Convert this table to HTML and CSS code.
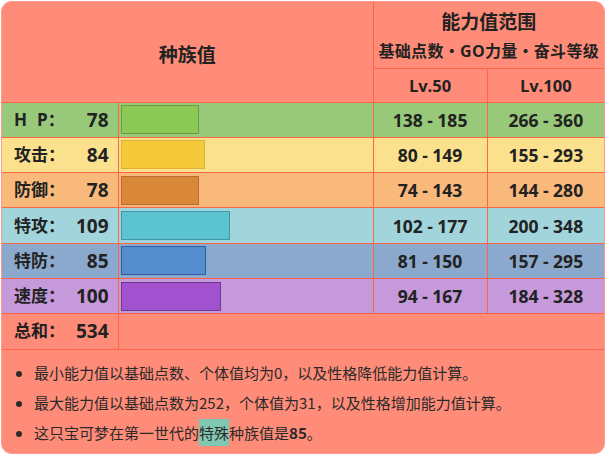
FILE: index.html
```html
<!DOCTYPE html>
<html lang="zh-CN">
<head>
<meta charset="utf-8">
<title>种族值</title>
<link rel="stylesheet" href="styles.css">
</head>
<body>
<div class="frame">
<table class="stats">
  <colgroup>
    <col class="c-label">
    <col class="c-bar">
    <col class="c-lv50">
    <col class="c-lv100">
  </colgroup>
  <tr class="head1">
    <th colspan="2" rowspan="2" class="title">种族值</th>
    <th colspan="2" class="range-title">
      <div class="big">能力值范围</div>
      <div class="sub">基础点数・GO力量・奋斗等级</div>
    </th>
  </tr>
  <tr class="head2">
    <th class="lv">Lv.50</th>
    <th class="lv">Lv.100</th>
  </tr>
  <tr class="row hp">
    <td class="label"><span class="name">H<span class="gap"></span>P：</span><span class="val">78</span></td>
    <td class="barcell"><div class="bar" style="width:78px"></div></td>
    <td class="rng">138 - 185</td>
    <td class="rng">266 - 360</td>
  </tr>
  <tr class="row atk">
    <td class="label"><span class="name">攻击：</span><span class="val">84</span></td>
    <td class="barcell"><div class="bar" style="width:84px"></div></td>
    <td class="rng">80 - 149</td>
    <td class="rng">155 - 293</td>
  </tr>
  <tr class="row def">
    <td class="label"><span class="name">防御：</span><span class="val">78</span></td>
    <td class="barcell"><div class="bar" style="width:78px"></div></td>
    <td class="rng">74 - 143</td>
    <td class="rng">144 - 280</td>
  </tr>
  <tr class="row spa">
    <td class="label"><span class="name">特攻：</span><span class="val">109</span></td>
    <td class="barcell"><div class="bar" style="width:109px"></div></td>
    <td class="rng">102 - 177</td>
    <td class="rng">200 - 348</td>
  </tr>
  <tr class="row spd">
    <td class="label"><span class="name">特防：</span><span class="val">85</span></td>
    <td class="barcell"><div class="bar" style="width:85px"></div></td>
    <td class="rng">81 - 150</td>
    <td class="rng">157 - 295</td>
  </tr>
  <tr class="row spe">
    <td class="label"><span class="name">速度：</span><span class="val">100</span></td>
    <td class="barcell"><div class="bar" style="width:100px"></div></td>
    <td class="rng">94 - 167</td>
    <td class="rng">184 - 328</td>
  </tr>
  <tr class="row total">
    <td class="label"><span class="name">总和：</span><span class="val">534</span></td>
    <td colspan="3" class="empty"></td>
  </tr>
  <tr class="notes-row">
    <td colspan="4" class="notes">
      <ul>
        <li>最小能力值以基础点数、个体值均为0，以及性格降低能力值计算。</li>
        <li>最大能力值以基础点数为252，个体值为31，以及性格增加能力值计算。</li>
        <li>这只宝可梦在第一世代的<span class="hl">特殊</span>种族值是<b>85</b>。</li>
      </ul>
    </td>
  </tr>
</table>
</div>
</body>
</html>
```

FILE: styles.css
```css
html, body {
  margin: 0;
  padding: 0;
  background: #ffffff;
}
body {
  padding: 2px;
  font-family: "Open Sans", "Noto Sans CJK SC", sans-serif;
  color: #222;
}
.frame {
  width: 602px;
  border-radius: 10px;
  overflow: hidden;
  background: #ff8c78;
  box-shadow: 0 0 0 1px #ff9a8a;
}
.stats {
  width: 602px;
  table-layout: fixed;
  border-collapse: collapse;
  background: #ff8c78;
}
.c-label { width: 116px; }
.c-bar { width: 255px; }
.c-lv50 { width: 114px; }
.c-lv100 { width: 117px; }
.stats th, .stats td {
  padding: 0;
  border: 1px solid #ff6444;
}
.stats tr > :first-child { border-left: none; }
.stats tr > :last-child { border-right: none; }
.stats .head1 th { border-top: none; }
.stats .notes-row td { border-bottom: none; }

.stats .title {
  font-family: "Noto Sans CJK SC", sans-serif;
  font-size: 19px;
  font-weight: bold;
  text-align: center;
  padding-top: 4px;
}
.head1 { height: 66px; }
.head2 { height: 34px; }
.stats .range-title {
  text-align: center;
  padding-top: 2px;
}
.big {
  font-family: "Noto Sans CJK SC", sans-serif;
  font-size: 19px;
  font-weight: bold;
  line-height: 30px;
}
.sub {
  font-family: "Open Sans", "Noto Sans CJK SC", sans-serif;
  font-size: 16px;
  font-weight: bold;
  line-height: 30px;
  white-space: nowrap;
  letter-spacing: 0.3px;
}
.stats .lv {
  font-size: 16.5px;
  font-weight: bold;
  text-align: center;
  padding-top: 1px;
}
.row { height: 35.3px; }
.stats .label {
  font-family: "Open Sans", "Noto Sans CJK SC", sans-serif;
  font-size: 17px;
  font-weight: bold;
  padding: 0 9px 0 12px;
  line-height: 26px;
}
.name { float: left; }
.val {
  float: right;
  font-size: 19px;
}
.gap { display: inline-block; width: 10px; }
.stats .barcell { padding: 0 0 0 2px; }
.bar {
  height: 29px;
  box-sizing: border-box;
  border: 1px solid;
}
.stats .rng {
  font-size: 17.5px;
  font-weight: bold;
  text-align: center;
}

.hp td { background: #98c97a; }
.hp .bar { background: #8cc854; border-color: #6c9d40; }
.atk td { background: #fbe08e; }
.atk .bar { background: #f5ca3a; border-color: #dcb235; }
.def td { background: #f9b97a; }
.def .bar { background: #d98837; border-color: #b8702e; }
.spa td { background: #a1d4db; }
.spa .bar { background: #5bc4d0; border-color: #3f98a3; }
.spd td { background: #8aa9cd; }
.spd .bar { background: #568dce; border-color: #2d5f9e; }
.spe td { background: #c599da; }
.spe .bar { background: #a352cf; border-color: #6c3b8a; }
.total td { background: #ff8c78; }

.notes-row { height: 104px; }
.stats .notes {
  vertical-align: top;
}
.notes ul {
  margin: 8px 0 0 0;
  padding: 0 0 0 32px;
  font-family: "Noto Sans CJK SC", sans-serif;
  font-size: 15px;
  color: #2a2a2a;
}
.notes li {
  line-height: 30px;
}
.hl {
  background: #80c8b4;
  padding: 3px 0;
}
.notes b { font-weight: bold; }
```
